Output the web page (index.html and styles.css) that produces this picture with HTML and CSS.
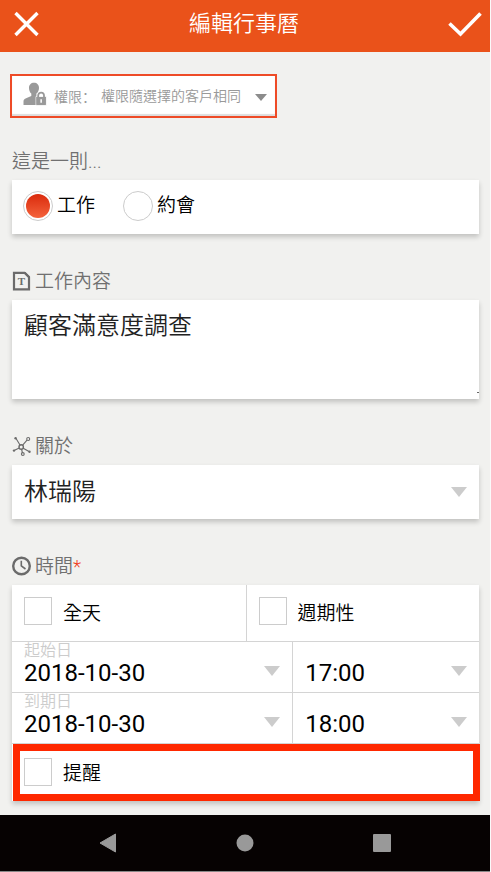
FILE: index.html
```html
<!DOCTYPE html>
<html lang="zh-Hant">
<head>
<meta charset="utf-8">
<meta name="viewport" content="width=device-width, initial-scale=1">
<title>編輯行事曆</title>
<link rel="stylesheet" href="styles.css">
</head>
<body>
<div class="app">
  <header class="topbar">
    <button type="button" class="icon-button" aria-label="關閉">
      <svg width="28" height="28" viewBox="0 0 28 28"><path d="M3.500 3L25.500 25M25.500 3L3.500 25" fill="none" stroke="#fff" stroke-width="3.400"/></svg>
    </button>
    <h1 class="title">編輯行事曆</h1>
    <button type="button" class="icon-button" aria-label="儲存">
      <svg width="34" height="28" viewBox="0 0 34 28"><path d="M1.500 13.500L12.500 24L32.500 3.500" fill="none" stroke="#fff" stroke-width="3.600"/></svg>
    </button>
  </header>

  <form class="form">
    <div class="permission">
      <svg width="24" height="24" viewBox="0 0 24 24" fill="#999">
        <path d="M11 .8c3 0 5 2 5 5.200 0 2.400-1.200 4.600-2.600 5.600v2.600l1.600 1V23H.5v-3.500c0-1.800 1-2.600 2.600-3.200l5.200-2.200v-2.500C7 10.600 6 8.400 6 6 6 2.800 8 .8 11 .8z"/>
        <path d="M13 14.500h10.200v8.800H13z" stroke="#fff" stroke-width=".8"/>
        <path d="M15.200 15v-1.500a2.900 2.900 0 0 1 5.800 0V15" fill="#fff" stroke="#999" stroke-width="1.800"/>
        <path d="M13.400 14.900h9.400v8h-9.400z"/>
        <path d="M17.400 17.300h1.500v3.400h-1.500z" fill="#fff"/>
      </svg>
      <label for="permission" lang="zh-Hans">權限：</label>
      <span class="picker">
        <select id="permission"><option>權限隨選擇的客戶相同</option></select>
        <svg class="arrow" width="12" height="7" viewBox="0 0 12 7"><path d="M0 0h12L6 7z" fill="#8c8c8c"/></svg>
      </span>
    </div>

    <fieldset class="section">
      <legend class="heading">這是一則...</legend>
      <div class="card choices">
        <label class="choice"><input type="radio" name="kind" checked>工作</label>
        <label class="choice"><input type="radio" name="kind">約會</label>
      </div>
    </fieldset>

    <div class="section">
      <label class="heading" for="content">
        <svg width="20" height="20" viewBox="0 0 20 20">
          <path d="M2 1.800h10.500l4.500 4.500v12H2z" fill="none" stroke="#6b6b6b" stroke-width="2.200"/>
          <path d="M11.500 1h2l4.500 4.500v2z" fill="#6b6b6b"/>
          <text x="9.500" y="14" class="glyph">T</text>
        </svg>
        工作內容
      </label>
      <textarea id="content" class="card">顧客滿意度調查</textarea>
    </div>

    <div class="section">
      <label class="heading" for="about">
        <svg width="20" height="20" viewBox="0 0 20 20" fill="none" stroke="#6b6b6b" stroke-width="1.100">
          <path d="M4.200 2.800L8 9M10.700 9.200L15 4.200M7.300 12L2.500 14.300M10.800 12L17 15.500M9.500 13l1 4" />
          <circle cx="9.200" cy="11" r="2.200" stroke-width="1.400"/>
          <circle cx="16.200" cy="3" r="1.500"/>
          <circle cx="10.800" cy="18" r="1.400"/>
          <g fill="#6b6b6b" stroke="none"><circle cx="3.600" cy="2.200" r="1.200"/><circle cx="2" cy="14.600" r="1.200"/><circle cx="17.500" cy="15.700" r="1.200"/></g>
        </svg>
        關於
      </label>
      <div class="card picker about">
        <select id="about"><option>林瑞陽</option></select>
        <svg class="arrow" width="16" height="10" viewBox="0 0 16 10"><path d="M0 0h16L8 10z" fill="#ccc"/></svg>
      </div>
    </div>

    <fieldset class="section">
      <legend class="heading">
        <svg width="20" height="20" viewBox="0 0 20 20" fill="none" stroke="#6b6b6b"><circle cx="9.500" cy="10" r="8.300" stroke-width="2.400"/><path d="M9.300 4.800v5l4.200 3.200" stroke-width="1.600"/></svg>
        <span>時間<span class="required">*</span></span>
      </legend>
      <div class="card">
        <div class="row halves">
          <label class="check"><input type="checkbox">全天</label>
          <label class="check"><input type="checkbox">週期性</label>
        </div>
        <div class="row moment">
          <div class="field">
            <label for="start-date">起始日</label>
            <span class="picker">
              <select id="start-date"><option>2018-10-30</option></select>
              <svg class="arrow" width="16" height="10" viewBox="0 0 16 10"><path d="M0 0h16L8 10z" fill="#ccc"/></svg>
            </span>
          </div>
          <div class="field">
            <span class="picker">
              <select aria-label="起始時間"><option>17:00</option></select>
              <svg class="arrow" width="16" height="10" viewBox="0 0 16 10"><path d="M0 0h16L8 10z" fill="#ccc"/></svg>
            </span>
          </div>
        </div>
        <div class="row moment">
          <div class="field">
            <label for="end-date">到期日</label>
            <span class="picker">
              <select id="end-date"><option>2018-10-30</option></select>
              <svg class="arrow" width="16" height="10" viewBox="0 0 16 10"><path d="M0 0h16L8 10z" fill="#ccc"/></svg>
            </span>
          </div>
          <div class="field">
            <span class="picker">
              <select aria-label="到期時間"><option>18:00</option></select>
              <svg class="arrow" width="16" height="10" viewBox="0 0 16 10"><path d="M0 0h16L8 10z" fill="#ccc"/></svg>
            </span>
          </div>
        </div>
        <label class="check reminder"><input type="checkbox">提醒</label>
      </div>
    </fieldset>
  </form>

  <nav class="navbar" aria-label="系統導覽">
    <button type="button" aria-label="返回"><svg width="20" height="20" viewBox="0 0 20 20"><path d="M2 10L17.500 1v18z" fill="#999" stroke="#999" stroke-linejoin="round"/></svg></button>
    <button type="button" aria-label="首頁"><svg width="20" height="20" viewBox="0 0 20 20"><circle cx="10" cy="10" r="8.500" fill="#999"/></svg></button>
    <button type="button" aria-label="最近使用"><svg width="20" height="20" viewBox="0 0 20 20"><rect x="1" y="1" width="18" height="18" rx="1" fill="#999"/></svg></button>
  </nav>
</div>
</body>
</html>
```
FILE: styles.css
```css
* {
  box-sizing: border-box;
}

body {
  margin: 0;
  background: #fff;
  color: #000;
  font-family: Roboto, "Noto Sans CJK TC", sans-serif;
  font-weight: 350;
}

button,
select,
textarea,
input {
  margin: 0;
  padding: 0;
  border: 0;
  border-radius: 0;
  background: none;
  color: inherit;
  font: inherit;
  appearance: none;
}

svg {
  display: block;
  flex: none;
}

.app {
  display: flex;
  flex-direction: column;
  min-height: 100vh;
  border-right: 1px solid #fafafa;
  background: #f1f1ef;
}

.topbar {
  display: flex;
  align-items: center;
  justify-content: space-between;
  height: 52px;
  padding: 0 8px 4px 12px;
  background: #ea521a;
  color: #fff;
}

.title {
  margin: 0;
  font-size: 22px;
  font-weight: 350;
  line-height: 32px;
}

.form {
  flex: 1;
  padding: 22px 11px 14px 12px;
}

.permission {
  display: inline-flex;
  align-items: center;
  height: 44px;
  margin-left: -2px;
  padding: 0 8px 0 11px;
  border: 2px solid #ee4b27;
  background: #fff;
  box-shadow: inset 0 -2px 1px #ddd;
  color: #999;
  font-size: 14px;
  vertical-align: top;
}

.permission svg:first-child {
  margin-right: 7px;
  margin-bottom: 4px;
}

.permission label {
  margin-right: 5px;
  font-family: "Noto Sans CJK SC", sans-serif;
}

.permission select {
  padding-right: 26px;
}

.picker {
  display: grid;
  align-items: center;
}

.picker > * {
  grid-area: 1 / 1;
}

.arrow {
  justify-self: end;
  pointer-events: none;
}

.permission .arrow {
  margin-top: 3px;
}

.section {
  min-width: 0;
  margin: 0;
  padding: 28px 0 0;
  border: 0;
}

fieldset.section {
  padding: 0;
}

.heading {
  display: flex;
  align-items: center;
  gap: 3px;
  height: 38px;
  padding: 1px 0 0;
  color: #707070;
  font-size: 19px;
  line-height: 28px;
}

.heading svg {
  margin-bottom: 2px;
}

fieldset > .heading {
  height: 66px;
  padding-top: 29px;
}

.permission + .section > .heading {
  height: 62px;
  padding-top: 26px;
}

.glyph {
  fill: #6b6b6b;
  font: bold 11px "Liberation Serif", serif;
  text-anchor: middle;
}

.required {
  color: #f03c1c;
}

.card {
  background: #fff;
  box-shadow: 0 3px 5px rgba(0, 0, 0, 0.2);
}

.choices {
  display: flex;
  align-items: center;
  gap: 28px;
  height: 54px;
  padding: 0 11px 2px;
}

.choice {
  display: flex;
  gap: 4px;
  font-size: 19px;
  line-height: 30px;
}

.choice input {
  width: 30px;
  height: 30px;
  border: 1px solid #ccc;
  border-radius: 50%;
}

.choice input:checked {
  padding: 2px;
  background: linear-gradient(#da2a0c, #f4633c) content-box;
}

textarea.card {
  display: block;
  width: 100%;
  height: 99px;
  padding: 10px 12px;
  background: #fff linear-gradient(#666, #666) no-repeat right bottom 6px / 2px 1px;
  color: #222;
  font-size: 24px;
  line-height: 32px;
  resize: none;
}

.about {
  height: 54px;
  padding: 0 12px;
  color: #222;
  font-size: 24px;
}

.row {
  display: grid;
  border-bottom: 1px solid #d4d4d4;
}

.row > * + * {
  border-left: 1px solid #d4d4d4;
}

.halves {
  grid-template-columns: 1fr 1fr;
  height: 57px;
}

.moment {
  grid-template-columns: 3fr 2fr;
  height: 51px;
}

.check {
  display: flex;
  align-items: center;
  gap: 11px;
  padding: 0 12px 4px;
  font-size: 19px;
}

.check input {
  width: 28px;
  height: 28px;
  border: 1px solid #ccc;
}

.field {
  display: flex;
  flex-direction: column;
  justify-content: flex-end;
  padding: 0 12px 6px;
  font-size: 24px;
  line-height: 26px;
}

.field label {
  color: #ccc;
  font-size: 16px;
  line-height: 18px;
}

.field select {
  height: 26px;
  font-weight: 400;
}

.field .arrow {
  margin-bottom: 4px;
}

.reminder {
  height: 57px;
  margin: 0 -1px 0 1px;
  padding: 0 4px 2px;
  border: 7px solid #ff2800;
}

.navbar {
  display: flex;
  align-items: center;
  justify-content: center;
  height: 57px;
  border-bottom: 1px solid #888;
  background: #060202;
}

.navbar button {
  display: flex;
  justify-content: center;
  width: 28%;
}
```
